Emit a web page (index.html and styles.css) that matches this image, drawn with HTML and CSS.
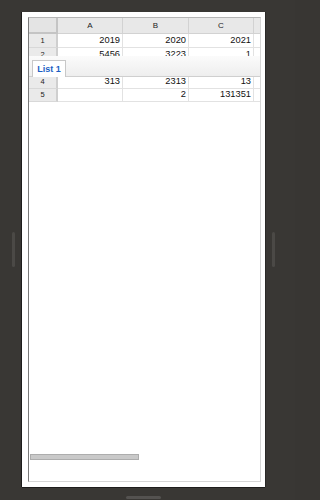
FILE: index.html
```html
<!DOCTYPE html>
<html>
<head>
<meta charset="utf-8">
<link rel="stylesheet" href="styles.css">
</head>
<body>
<div class="device">
  <div class="middle">
    <div class="gutter gutter-left"><span class="side-pill"></span></div>
    <div class="frame">
      <div class="sheet">
        <div class="grid">
          <div class="row head">
            <div class="c corner"></div>
            <div class="c col">A</div>
            <div class="c col">B</div>
            <div class="c col">C</div>
            <div class="c col edge"></div>
          </div>
          <div class="row r14">
            <div class="c rh">1</div>
            <div class="c d">2019</div>
            <div class="c d">2020</div>
            <div class="c d">2021</div>
            <div class="c d edge"></div>
          </div>
          <div class="row r14">
            <div class="c rh">2</div>
            <div class="c d">5456</div>
            <div class="c d">3223</div>
            <div class="c d">1</div>
            <div class="c d edge"></div>
          </div>
          <div class="row r14">
            <div class="c rh"></div>
            <div class="c d"></div>
            <div class="c d"></div>
            <div class="c d"></div>
            <div class="c d edge"></div>
          </div>
          <div class="row r13">
            <div class="c rh">4</div>
            <div class="c d">313</div>
            <div class="c d">2313</div>
            <div class="c d">13</div>
            <div class="c d edge"></div>
          </div>
          <div class="row r13">
            <div class="c rh">5</div>
            <div class="c d"></div>
            <div class="c d">2</div>
            <div class="c d">131351</div>
            <div class="c d edge"></div>
          </div>
        </div>
        <div class="tabbar">
          <div class="tab">List 1</div>
        </div>
        <div class="spacer"></div>
        <div class="hscroll"></div>
      </div>
    </div>
    <div class="gutter gutter-right"><span class="side-pill"></span></div>
  </div>
  <div class="home-pill"></div>
</div>
</body>
</html>
```

FILE: styles.css
```css
html, body {
  margin: 0;
  padding: 0;
  background: #383633;
}
body {
  font-family: "Liberation Sans", Arial, sans-serif;
}
.device {
  width: 295px;
  height: 500px;
  box-sizing: border-box;
  padding-top: 12px;
  display: flex;
  flex-direction: column;
  background: #393734;
}
.middle {
  display: flex;
  height: 475px;
}
.gutter {
  display: flex;
  align-items: center;
}
.gutter-left {
  width: 22px;
}
.gutter-left .side-pill {
  margin-left: 12px;
}
.gutter-right {
  width: 30px;
}
.gutter-right .side-pill {
  margin-left: 7px;
}
.side-pill {
  display: block;
  width: 3px;
  height: 35px;
  background: #4b4946;
  border-radius: 2px;
}
.frame {
  width: 243px;
  height: 475px;
  box-sizing: border-box;
  background: #fff;
  padding: 5px 4px 5px 6px;
  box-shadow: -1px 0 0 #1e1d1c, 0 1px 0 #1e1d1c, 1px 0 0 #2a2927;
}
.sheet {
  position: relative;
  height: 465px;
  box-sizing: border-box;
  border-left: 1px solid #7a7a7a;
  border-right: 1px solid #d6d6d6;
  border-bottom: 1px solid #d6d6d6;
  border-top: 1px solid #b5b5b5;
  display: flex;
  flex-direction: column;
  overflow: hidden;
}
.grid {
  display: flex;
  flex-direction: column;
}
.row {
  display: grid;
  grid-template-columns: 29px 65px 66px 65px 7px;
}
.head {
  height: 16px;
}
.r14 { height: 14px; }
.r13 { height: 13px; }
.c {
  box-sizing: border-box;
  font-size: 9.3px;
  color: #111;
  line-height: 1;
  display: flex;
  align-items: center;
}
.corner {
  background: #e4e4e4;
  border-right: 2px solid #c4c4c4;
  border-bottom: 2px solid #c4c4c4;
}
.col {
  background: #e8e8e8;
  border-right: 1px solid #d2d2d2;
  border-bottom: 1px solid #d2d2d2;
  justify-content: center;
  font-size: 8px;
  color: #222;
}
.col.edge {
  border-right: none;
}
.rh {
  background: #eaeaea;
  border-right: 2px solid #cfcfcf;
  border-bottom: 1px solid #d8d8d8;
  justify-content: center;
  font-size: 7.5px;
  color: #222;
}
.d {
  background: #fff;
  border-right: 1px solid #e2e2e2;
  border-bottom: 1px solid #e2e2e2;
  justify-content: flex-end;
  padding-right: 2px;
}
.d.edge {
  border-right: none;
}
.tabbar {
  position: absolute;
  left: 0;
  right: 0;
  top: 38px;
  height: 21px;
  box-sizing: border-box;
  background: linear-gradient(#fbfbfb, #eeeeee);
  border-bottom: 1px solid #cfcfcf;
  padding-left: 3px;
  display: flex;
  align-items: flex-end;
}
.tab {
  height: 17px;
  width: 34px;
  box-sizing: border-box;
  background: #fff;
  border: 1px solid #c8c8c8;
  border-bottom: none;
  color: #1d5fc4;
  font-weight: bold;
  font-size: 9px;
  display: flex;
  align-items: center;
  justify-content: center;
  margin-bottom: -1px;
}
.spacer {
  flex: 1;
}
.hscroll {
  width: 109px;
  height: 6px;
  box-sizing: border-box;
  margin-left: 1px;
  margin-bottom: 21px;
  background: #c9c9c9;
  border: 1px solid #adadad;
}
.home-pill {
  width: 35px;
  height: 3px;
  margin-top: 9px;
  margin-left: 126px;
  background: #545250;
  border-radius: 2px;
}
```
